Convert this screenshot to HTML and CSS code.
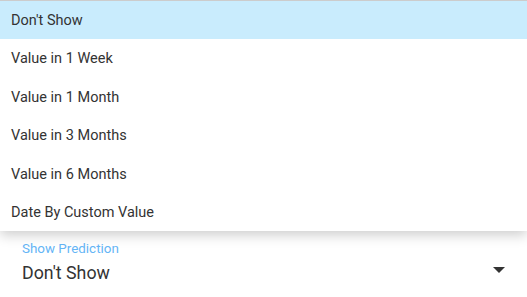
FILE: index.html
```html
<!DOCTYPE html>
<html lang="en">
<head>
    <meta charset="UTF-8">
    <title>Show Prediction</title>
    <link rel="stylesheet" href="styles.css">
</head>
<body>
    <div class="field">
        <label class="field-label">Show Prediction</label>
        <div class="field-row">
            <span class="field-value">Don't Show</span>
            <span class="arrow"></span>
        </div>
    </div>

    <ul class="menu">
        <li class="selected">Don't Show</li>
        <li>Value in 1 Week</li>
        <li>Value in 1 Month</li>
        <li>Value in 3 Months</li>
        <li>Value in 6 Months</li>
        <li>Date By Custom Value</li>
    </ul>
</body>
</html>
```

FILE: styles.css
```css
body {
    font-family: Roboto, "Liberation Sans", sans-serif;
    margin: 0;
    background: #fff;
    height: 297px;
    position: relative;
    overflow: hidden;
}
.field {
    padding: 240px 22px 0 22px;
}
.field-label {
    display: block;
    font-size: 13.4px;
    line-height: 18px;
    color: #64b5f6;
}
.field-row {
    display: flex;
    align-items: center;
    justify-content: space-between;
    height: 28px;
    padding-top: 1px;
}
.field-value {
    font-size: 17.8px;
    line-height: 28px;
    color: #333;
}
.arrow {
    width: 0;
    height: 0;
    border-left: 6px solid transparent;
    border-right: 6px solid transparent;
    border-top: 6px solid #333;
    margin-top: -7px;
}
.menu {
    position: absolute;
    top: 0;
    left: 0;
    right: 0;
    margin: 0;
    padding: 0;
    list-style: none;
    background: #fff;
    border-top: 1px solid #ccc;
    box-shadow: 0 4px 12px rgba(0, 0, 0, 0.2);
}
.menu li {
    height: 37.4px;
    padding: 1px 11px 0 11px;
    line-height: 37.4px;
    font-size: 14.5px;
    color: #333;
}
.menu li.selected {
    background: #c9ecfd;
}
```
